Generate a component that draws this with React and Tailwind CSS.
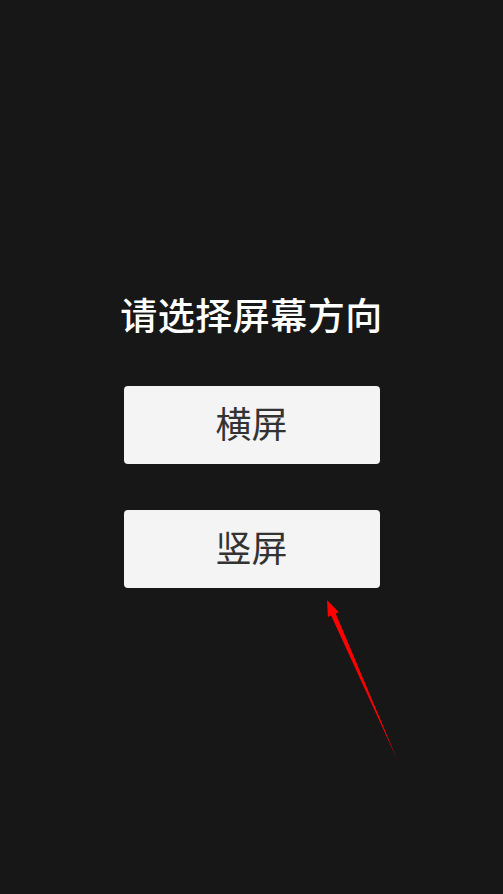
export default function App() {
  const cjk = { fontFamily: '"Noto Sans", "Noto Sans CJK SC", sans-serif' };

  return (
    <div className="relative min-h-screen w-full bg-[#171717] flex flex-col items-center pt-[296px]" style={cjk}>
      {/* 标题 */}
      <h1 className="text-[37px] leading-[40px] font-medium text-white tracking-[0.5px]">请选择屏幕方向</h1>

      {/* 选项按钮 */}
      <div className="mt-[50px] flex flex-col gap-[46px]">
        <button className="w-[256px] h-[78px] rounded-[4px] bg-[#f4f4f4] text-[36px] text-[#333333] flex items-center justify-center">
          横屏
        </button>
        <button className="w-[256px] h-[78px] rounded-[4px] bg-[#f4f4f4] text-[36px] text-[#333333] flex items-center justify-center">
          竖屏
        </button>
      </div>

      {/* 红色箭头标注 */}
      <svg className="absolute left-0 top-0 pointer-events-none" width="503" height="894" viewBox="0 0 503 894">
        <polygon
          points="327,600 338.9,612.2 335.7,613.6 397,759 331.1,615.6 327.9,617"
          fill="#ff0000"
        />
      </svg>
    </div>
  );
}
